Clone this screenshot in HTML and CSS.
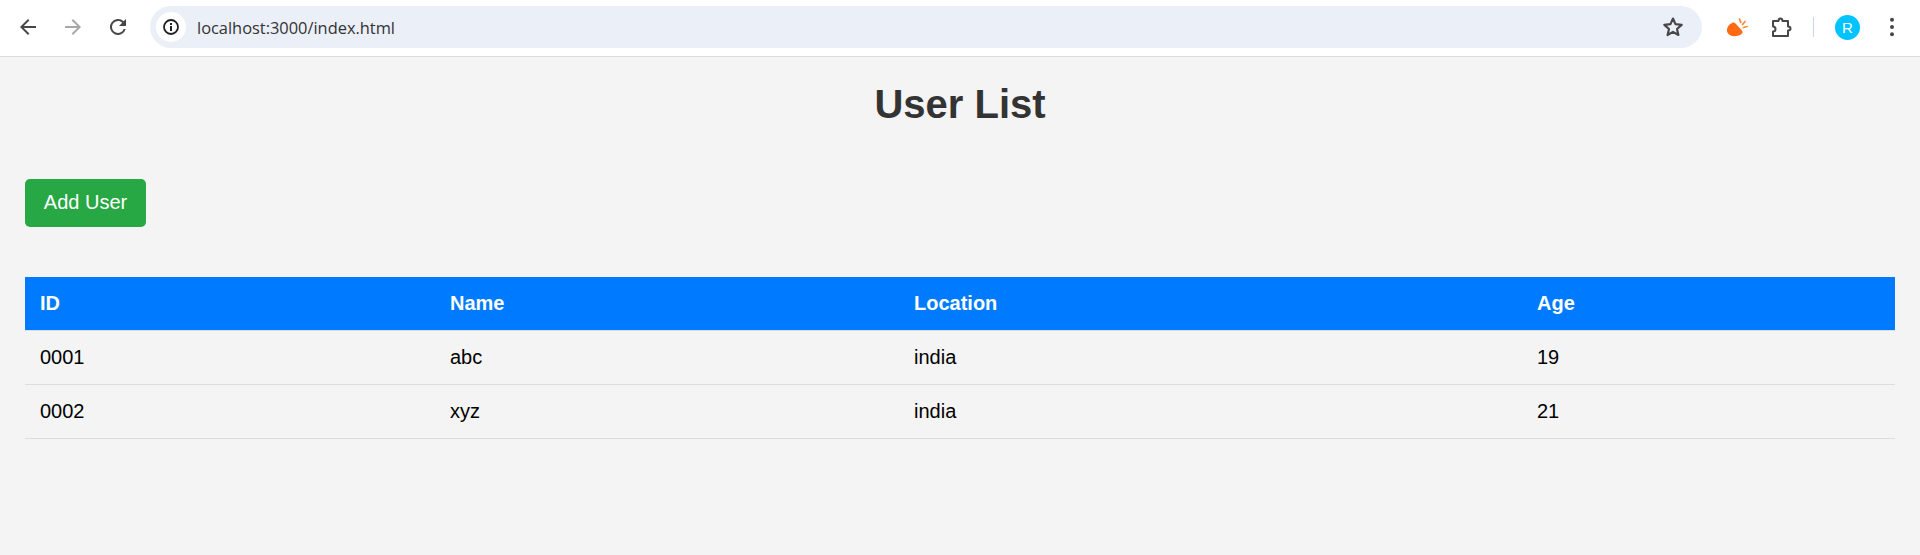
FILE: index.html
```html
<!DOCTYPE html>
<html>
    <head>
        <link rel="stylesheet" href="styles.css">
    </head>
    <body>
        <div class="toolbar">
            <div class="nav">
                <svg class="icon" viewBox="0 0 24 24"><path d="M20 11H7.8l5.6-5.6L12 4l-8 8 8 8 1.4-1.4L7.8 13H20z" fill="#474747"/></svg>
                <svg class="icon" viewBox="0 0 24 24"><path d="M4 11h12.2l-5.6-5.6L12 4l8 8-8 8-1.4-1.4 5.6-5.6H4z" fill="#a8a8a8"/></svg>
                <svg class="icon" viewBox="0 0 24 24"><path d="M17.65 6.35A8 8 0 1 0 19.73 14h-2.08A6 6 0 1 1 12 6c1.66 0 3.14.69 4.22 1.78L13 11h7V4z" fill="#474747"/></svg>
            </div>
            <div class="omnibox">
                <span class="site-info">
                    <svg viewBox="0 0 20 20" width="20" height="20"><circle cx="10" cy="10" r="7" fill="none" stroke="#1f1f1f" stroke-width="1.8"/><rect x="9" y="9" width="2" height="5" fill="#1f1f1f"/><rect x="9" y="6" width="2" height="2" fill="#1f1f1f"/></svg>
                </span>
                <span class="url">localhost:3000/index.html</span>
                <svg class="star" viewBox="0 0 24 24"><path d="M12 4.2l2.3 5.2 5.7.6-4.3 3.8 1.3 5.6-5-2.9-5 2.9 1.3-5.6L4 10l5.7-.6z" fill="none" stroke="#474747" stroke-width="2" stroke-linejoin="round"/></svg>
            </div>
            <div class="tools">
                <svg class="tool-ext" viewBox="0 0 24 24"><path d="M7 8C9 7 10 8 11 9L16.500 15C17.500 16 18 17.500 17 18.500C14 21.500 7 22.500 3.500 19C.5 15.500 2 10.500 7 8z" fill="#ff6a13"/><path d="M14.500 4l1.300 3.500M20 6.500l-2.500 3M22 11.500l-3.500 1" stroke="#ff8a3c" stroke-width="1.800" stroke-linecap="round" fill="none"/></svg>
                <svg class="tool-puzzle" viewBox="0 0 24 24"><path d="M4 6h5.500c0-1 .6-2.500 2-2.500s2 1.500 2 2.500H19v5.500c1 0 2.500.5 2.500 2s-1.500 2-2.500 2V21H4v-4.500c1.500 0 2.500-1 2.500-2.500S5.500 11.500 4 11.500z" fill="none" stroke="#474747" stroke-width="2" stroke-linejoin="round"/></svg>
                <span class="divider"></span>
                <span class="avatar">R</span>
                <svg class="tool-menu" viewBox="0 0 6 22"><circle cx="3" cy="3.700" r="2" fill="#474747"/><circle cx="3" cy="11" r="2" fill="#474747"/><circle cx="3" cy="18.300" r="2" fill="#474747"/></svg>
            </div>
        </div>
        <div class="page">
            <h1>User List</h1>
            <button class="add-btn">Add User</button>
            <table>
                <thead>
                    <tr>
                        <th class="col-id">ID</th>
                        <th class="col-name">Name</th>
                        <th class="col-location">Location</th>
                        <th>Age</th>
                    </tr>
                </thead>
                <tbody>
                    <tr>
                        <td>0001</td>
                        <td>abc</td>
                        <td>india</td>
                        <td>19</td>
                    </tr>
                    <tr>
                        <td>0002</td>
                        <td>xyz</td>
                        <td>india</td>
                        <td>21</td>
                    </tr>
                </tbody>
            </table>
        </div>
    </body>
</html>
```

FILE: styles.css
```css
html, body{
    height: 100%;
}
body{
    margin: 0;
    overflow: hidden;
    background-color: #f4f4f4;
    font-family: "Liberation Sans", Arial, sans-serif;
}
.toolbar{
    display: flex;
    align-items: center;
    height: 54px;
    padding-bottom: 2px;
    background-color: white;
    border-bottom: 1px solid #dcdcdc;
}
.nav{
    display: flex;
    align-items: center;
    gap: 21px;
    margin-left: 16px;
    width: 134px;
}
.icon{
    width: 24px;
    height: 24px;
}
.omnibox{
    display: flex;
    align-items: center;
    width: 1552px;
    height: 42px;
    background-color: #ebeff7;
    border-radius: 21px;
    box-sizing: border-box;
    padding-left: 6px;
}
.site-info{
    display: flex;
    align-items: center;
    justify-content: center;
    width: 30px;
    height: 30px;
    background-color: white;
    border-radius: 50%;
}
.url{
    flex: 1;
    margin-left: 11px;
    font-family: "Open Sans", "Liberation Sans", sans-serif;
    font-size: 16.4px;
    color: #333;
}
.star{
    width: 26px;
    height: 26px;
    margin-right: 16px;
}
.tools{
    display: flex;
    align-items: center;
    margin-left: 23px;
}
.tool-ext{
    width: 24px;
    height: 24px;
}
.tool-puzzle{
    width: 24px;
    height: 24px;
    margin-left: 20px;
}
.divider{
    width: 1px;
    height: 20px;
    margin-left: 20px;
    background-color: #c8d6ec;
}
.avatar{
    display: flex;
    align-items: center;
    justify-content: center;
    width: 25px;
    height: 25px;
    margin-left: 21px;
    border-radius: 50%;
    background-color: #00c3ff;
    color: white;
    font-size: 15px;
}
.tool-menu{
    width: 6px;
    height: 22px;
    margin-left: 29px;
}
.page{
    padding: 0 25px;
}
h1{
    margin: 24px 0 0;
    text-align: center;
    font-size: 40px;
    line-height: 46px;
    color: #333;
}
.add-btn{
    display: block;
    width: 121px;
    height: 48px;
    margin-top: 52px;
    padding: 0 0 2px;
    background-color: #28a745;
    color: white;
    border: none;
    border-radius: 5px;
    font-family: inherit;
    font-size: 20px;
}
table{
    width: 1870px;
    margin-top: 50px;
    border-collapse: collapse;
    table-layout: fixed;
    font-size: 20px;
}
th, td{
    height: 53px;
    padding: 0 15px;
    text-align: left;
    border-bottom: 1px solid #dddddd;
}
th{
    background-color: #007bff;
    color: white;
}
td{
    color: black;
}
.col-id{
    width: 380px;
}
.col-name{
    width: 434px;
}
.col-location{
    width: 593px;
}
```
